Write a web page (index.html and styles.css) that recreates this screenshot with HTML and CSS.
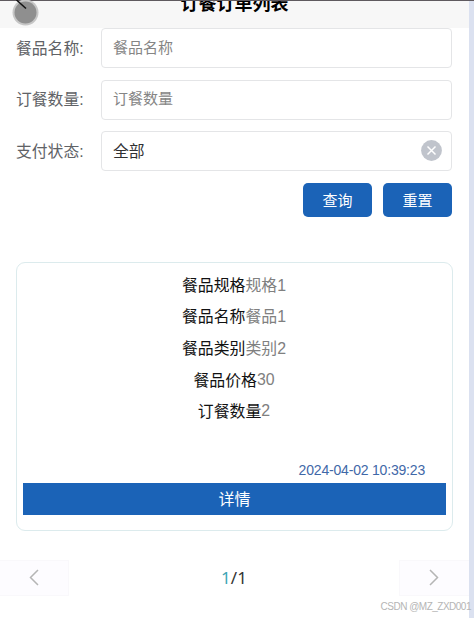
FILE: index.html
```
<!DOCTYPE html>
<html lang="zh-CN">
<head>
    <meta charset="UTF-8">
    <meta name="viewport" content="width=device-width, initial-scale=1.0">
    <title>订餐订单列表</title>
    <link rel="stylesheet" href="styles.css">
</head>
<body>

<div class="page">
    <header class="header">
        <svg class="back" width="40" height="28" viewBox="0 0 40 28">
            <circle cx="25.5" cy="12.5" r="13" fill="#c6c6c6"/>
            <circle cx="25.5" cy="12.5" r="11" fill="#8f8f8f"/>
            <path d="M16.5 0L26 8.5" stroke="#111" stroke-width="1.5"/>
        </svg>
        <h1 class="title">订餐订单列表</h1>
    </header>

    <form class="search">
        <div class="row">
            <label class="label" for="name">餐品名称:</label>
            <input class="field" id="name" type="text" placeholder="餐品名称">
        </div>
        <div class="row">
            <label class="label" for="count">订餐数量:</label>
            <input class="field" id="count" type="text" placeholder="订餐数量">
        </div>
        <div class="row">
            <span class="label">支付状态:</span>
            <div class="field select">
                <span>全部</span>
                <svg width="21" height="21" viewBox="0 0 21 21">
                    <circle cx="10.5" cy="10.5" r="10.4" fill="#c0c4cc"/>
                    <path d="M6.5 6.5L14.5 14.5M14.5 6.5L6.5 14.5" stroke="#fff" stroke-width="1.5"/>
                </svg>
            </div>
        </div>
        <div class="actions">
            <button class="btn" type="button">查询</button>
            <button class="btn" type="reset">重置</button>
        </div>
    </form>

    <div class="card">
        <div class="item"><span>餐品规格</span><span class="value">规格1</span></div>
        <div class="item"><span>餐品名称</span><span class="value">餐品1</span></div>
        <div class="item"><span>餐品类别</span><span class="value">类别2</span></div>
        <div class="item"><span>餐品价格</span><span class="value number">30</span></div>
        <div class="item"><span>订餐数量</span><span class="value number">2</span></div>
        <div class="time">2024-04-02 10:39:23</div>
        <button class="detail" type="button">详情</button>
    </div>

    <div class="pager">
        <button class="pager-btn prev" type="button">
            <svg width="10" height="17" viewBox="0 0 10 17"><path d="M9 1L1.5 8.5L9 16"/></svg>
        </button>
        <div class="pages"><span class="current">1</span>/1</div>
        <button class="pager-btn next" type="button">
            <svg width="10" height="17" viewBox="0 0 10 17"><path d="M1 1L8.5 8.5L1 16"/></svg>
        </button>
    </div>
</div>
<div class="watermark">CSDN @MZ_ZXD001</div>

</body>
</html>
```
FILE: styles.css
```
* {
    box-sizing: border-box;
}
body {
    margin: 0;
    height: 618px;
    overflow: hidden;
    background-color: #dbe1f0;
    border-top: 1px solid #5f5a5f;
    font-family: "Liberation Sans", "Noto Sans CJK SC", sans-serif;
}
button, input {
    font-family: inherit;
}
.page {
    width: 469px;
    height: 617px;
    background-color: #fff;
}
.header {
    display: flex;
    justify-content: center;
    height: 27px;
    background-color: #f7f7f7;
}
.back {
    position: absolute;
    left: 0;
    top: 0;
}
.title {
    margin: -10px 0 0;
    font-size: 18px;
    line-height: 26px;
    height: 26px;
    color: #000;
}
.search {
    padding: 0 17px 0 16px;
}
.row {
    display: flex;
    align-items: center;
    height: 40px;
    margin-bottom: 11.5px;
}
.label {
    width: 85px;
    padding-top: 1px;
    font-size: 15.8px;
    line-height: 38px;
    color: #606266;
}
.field {
    flex: 1;
    height: 40px;
    padding: 0 9px 2px 11px;
    border: 1px solid #e4e5e7;
    border-radius: 4px;
    font-size: 15px;
    color: #303133;
    outline: none;
}
.field::placeholder {
    color: #858585;
}
.select {
    display: flex;
    align-items: center;
    justify-content: space-between;
    padding-bottom: 1px;
    font-size: 15.8px;
}
.actions {
    display: flex;
    justify-content: flex-end;
    gap: 11px;
}
.btn {
    width: 69px;
    height: 34px;
    padding: 0;
    border: none;
    border-radius: 5px;
    background-color: #1b63b7;
    color: #fff;
    font-size: 15px;
}
.card {
    display: flex;
    flex-direction: column;
    height: 269px;
    margin: 45px 16px 0;
    padding: 7px 6px 15px;
    border: 1px solid #dcebed;
    border-radius: 9px;
}
.item {
    display: flex;
    justify-content: center;
    height: 31.7px;
    padding-right: 1px;
    line-height: 32px;
    font-size: 15.9px;
    color: #111;
}
.value {
    color: #808080;
}
.number {
    line-height: 29px;
}
.time {
    margin-top: auto;
    padding-right: 21px;
    text-align: right;
    font-size: 14px;
    letter-spacing: -0.19px;
    line-height: 26px;
    color: #3f68a8;
}
.detail {
    height: 32px;
    padding: 0 0 2px;
    border: none;
    background-color: #1b63b7;
    color: #fff;
    font-size: 16px;
}
.pager {
    display: flex;
    justify-content: space-between;
    align-items: center;
    height: 36px;
    margin-top: 29px;
}
.pager-btn {
    display: flex;
    align-items: center;
    justify-content: center;
    width: 70px;
    height: 36px;
    padding: 0;
    border: 1px solid #f9f8fb;
    background-color: #fdfcff;
}
.pager-btn path {
    fill: none;
    stroke: #b5b5b5;
    stroke-width: 1.5;
}
.prev {
    width: 69px;
    border-left: none;
}
.next {
    border-right: none;
}
.pages {
    font-family: "Noto Sans", sans-serif;
    font-size: 17px;
    color: #333;
}
.current {
    color: #3da5b5;
}
.watermark {
    position: absolute;
    right: 3px;
    top: 600px;
    font-size: 10px;
    letter-spacing: -0.5px;
    line-height: 13px;
    color: #b5b5b5;
}
```
